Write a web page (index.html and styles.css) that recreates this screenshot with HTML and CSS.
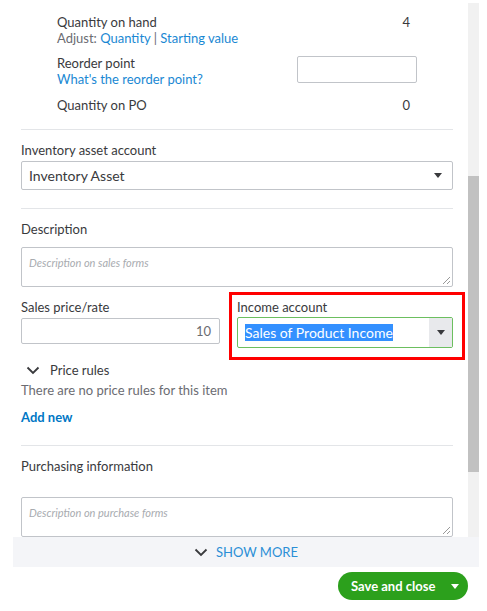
FILE: index.html
```html
<!DOCTYPE html>
<html lang="en">
<head>
  <meta charset="UTF-8" />
  <title>Product details</title>
  <link rel="stylesheet" href="styles.css">
</head>
<body>

  <div class="panel">
    <div class="panel-body">

      <div class="stock">
        <div class="stock-row">
          <div>
            <div class="label">Quantity on hand</div>
            <div class="hint">Adjust: <a href="#">Quantity</a> | <a href="#">Starting value</a></div>
          </div>
          <div class="value">4</div>
        </div>
        <div class="stock-row reorder">
          <div>
            <div class="label">Reorder point</div>
            <a class="link-line" href="#">What's the reorder point?</a>
          </div>
          <input class="small-input" type="text" />
        </div>
        <div class="stock-row po">
          <div class="label">Quantity on PO</div>
          <div class="value">0</div>
        </div>
      </div>

      <div class="section">
        <div class="label">Inventory asset account</div>
        <div class="select asset">
          <span>Inventory Asset</span>
          <span class="caret"></span>
        </div>
      </div>

      <div class="section">
        <div class="label">Description</div>
        <div class="textarea">
          <span class="placeholder">Description on sales forms</span>
          <span class="grip"></span>
        </div>

        <div class="price-row">
          <div class="field">
            <div class="label">Sales price/rate</div>
            <div class="price-input">10</div>
          </div>
          <div class="field income">
            <div class="label">Income account</div>
            <div class="select focused">
              <span class="selected-text">Sales of Product Income</span>
              <span class="caret-box"><span class="caret"></span></span>
            </div>
          </div>
        </div>

        <div class="rules-toggle">
          <svg width="14" height="9" viewBox="0 0 14 9"><path d="M1.5 1.5 L7 7 L12.5 1.5" fill="none" stroke="#393a3d" stroke-width="1.8"/></svg>
          <span>Price rules</span>
        </div>
        <div class="hint rules-empty">There are no price rules for this item</div>
        <a class="add-new" href="#">Add new</a>
      </div>

      <div class="section last">
        <div class="label">Purchasing information</div>
        <div class="textarea purchase">
          <span class="placeholder">Description on purchase forms</span>
          <span class="grip"></span>
        </div>
      </div>

    </div>

    <div class="scrollbar">
      <div class="thumb"></div>
    </div>
  </div>

  <div class="show-more">
    <svg width="14" height="9" viewBox="0 0 14 9"><path d="M1.5 1.5 L7 7 L12.5 1.5" fill="none" stroke="#393a3d" stroke-width="1.8"/></svg>
    <span>SHOW MORE</span>
  </div>

  <div class="actions">
    <button class="save-btn">
      <span>Save and close</span>
      <span class="btn-caret"></span>
    </button>
  </div>

</body>
</html>
```

FILE: styles.css
```css
* {
  margin: 0;
  padding: 0;
  box-sizing: border-box;
  font-family: 'Lato', 'Open Sans', sans-serif;
}

:root {
  --text: #393a3d;
  --muted: #6b6c72;
  --link: #1a88d3;
  --border: #c1c4c9;
  --green: #2ca01c;
}

body {
  background: #fff;
  color: var(--text);
  font-size: 13px;
  line-height: 16px;
  width: 487px;
}

a {
  color: var(--link);
  text-decoration: none;
}

.panel {
  display: flex;
  height: 537px;
  overflow: hidden;
}

.panel-body {
  width: 468px;
  padding: 0 15px 0 21px;
}

.label {
  color: var(--text);
}

.hint {
  display: block;
  color: var(--muted);
}

.link-line {
  display: block;
}

/* stock block at the top */
.stock {
  padding: 14px 36px 16px 36px;
  border-bottom: 1px solid #e3e5e8;
}

.stock-row {
  display: flex;
  justify-content: space-between;
  align-items: flex-start;
}

.stock-row .value {
  padding-right: 7px;
  color: var(--text);
}

.stock-row.reorder {
  margin-top: 9px;
}

.stock-row.po {
  margin-top: 10px;
}

.small-input {
  width: 120px;
  height: 27px;
  margin-top: 1px;
  border: 1px solid var(--border);
  border-radius: 2px;
}

.section {
  padding: 12px 0 18px;
  border-bottom: 1px solid #e3e5e8;
}

.section.last {
  border-bottom: none;
}

.select {
  display: flex;
  align-items: center;
  justify-content: space-between;
  margin-top: 3px;
  height: 29px;
  padding: 0 10px 0 7px;
  border: 1px solid var(--border);
  border-radius: 2px;
  font-size: 14px;
  color: var(--text);
}

.caret {
  width: 0;
  height: 0;
  border-left: 4px solid transparent;
  border-right: 4px solid transparent;
  border-top: 5px solid #393a3d;
}

.textarea {
  position: relative;
  margin-top: 10px;
  height: 40px;
  padding: 6px 7px;
  border: 1px solid var(--border);
  border-radius: 2px;
}

.placeholder {
  font-size: 11px;
  font-style: italic;
  color: #a8abb0;
}

.grip {
  position: absolute;
  right: 2px;
  bottom: 2px;
  width: 7px;
  height: 7px;
  background: linear-gradient(135deg, transparent 45%, #999 45%, #999 55%, transparent 55%, transparent 75%, #999 75%, #999 85%, transparent 85%);
}

/* price + income account */
.price-row {
  display: grid;
  grid-template-columns: 199px 216px;
  column-gap: 17px;
  margin-top: 12px;
}

.price-input {
  margin-top: 3px;
  height: 26px;
  padding: 0 8px;
  line-height: 24px;
  text-align: right;
  color: var(--muted);
  border: 1px solid var(--border);
  border-radius: 2px;
}

.income {
  position: relative;
}

.income::after {
  content: "";
  position: absolute;
  inset: -7px -12px -12px -8px;
  border: 3px solid #f00;
}

.select.focused {
  margin-top: 2px;
  height: 31px;
  padding: 0 0 0 7px;
  border-color: #6cbf5f;
}

.selected-text {
  background: #3390ff;
  color: #fff;
  line-height: 17px;
}

.caret-box {
  display: flex;
  align-items: center;
  justify-content: center;
  width: 23px;
  height: 29px;
  background: #e8e9ec;
}

.rules-toggle {
  display: flex;
  align-items: center;
  gap: 10px;
  margin-top: 14px;
  padding-left: 5px;
}

.rules-empty {
  margin-top: 4px;
}

.add-new {
  display: block;
  margin: 11px 0 2px;
  font-weight: 700;
  color: #0077c5;
}

.textarea.purchase {
  margin-top: 23px;
}

/* fake scrollbar */
.scrollbar {
  width: 11px;
  margin-top: 3px;
  background: #f1f1f1;
}

.thumb {
  margin-top: 173px;
  height: 296px;
  background: #c1c1c1;
}

.show-more {
  display: flex;
  align-items: center;
  justify-content: center;
  gap: 8px;
  margin-left: 13px;
  width: 466px;
  height: 30px;
  background: #f4f5f8;
  color: #2b8fd6;
  font-size: 13px;
}

.actions {
  display: flex;
  justify-content: flex-end;
  padding: 5px 19px 0 0;
}

.save-btn {
  display: flex;
  align-items: center;
  justify-content: space-between;
  width: 130px;
  height: 28px;
  padding: 0 9px 0 13px;
  border: none;
  border-radius: 14px;
  background: var(--green);
  color: #fff;
  font-size: 13px;
  font-weight: 700;
}

.btn-caret {
  width: 0;
  height: 0;
  border-left: 4px solid transparent;
  border-right: 4px solid transparent;
  border-top: 5px solid #fff;
}
```
